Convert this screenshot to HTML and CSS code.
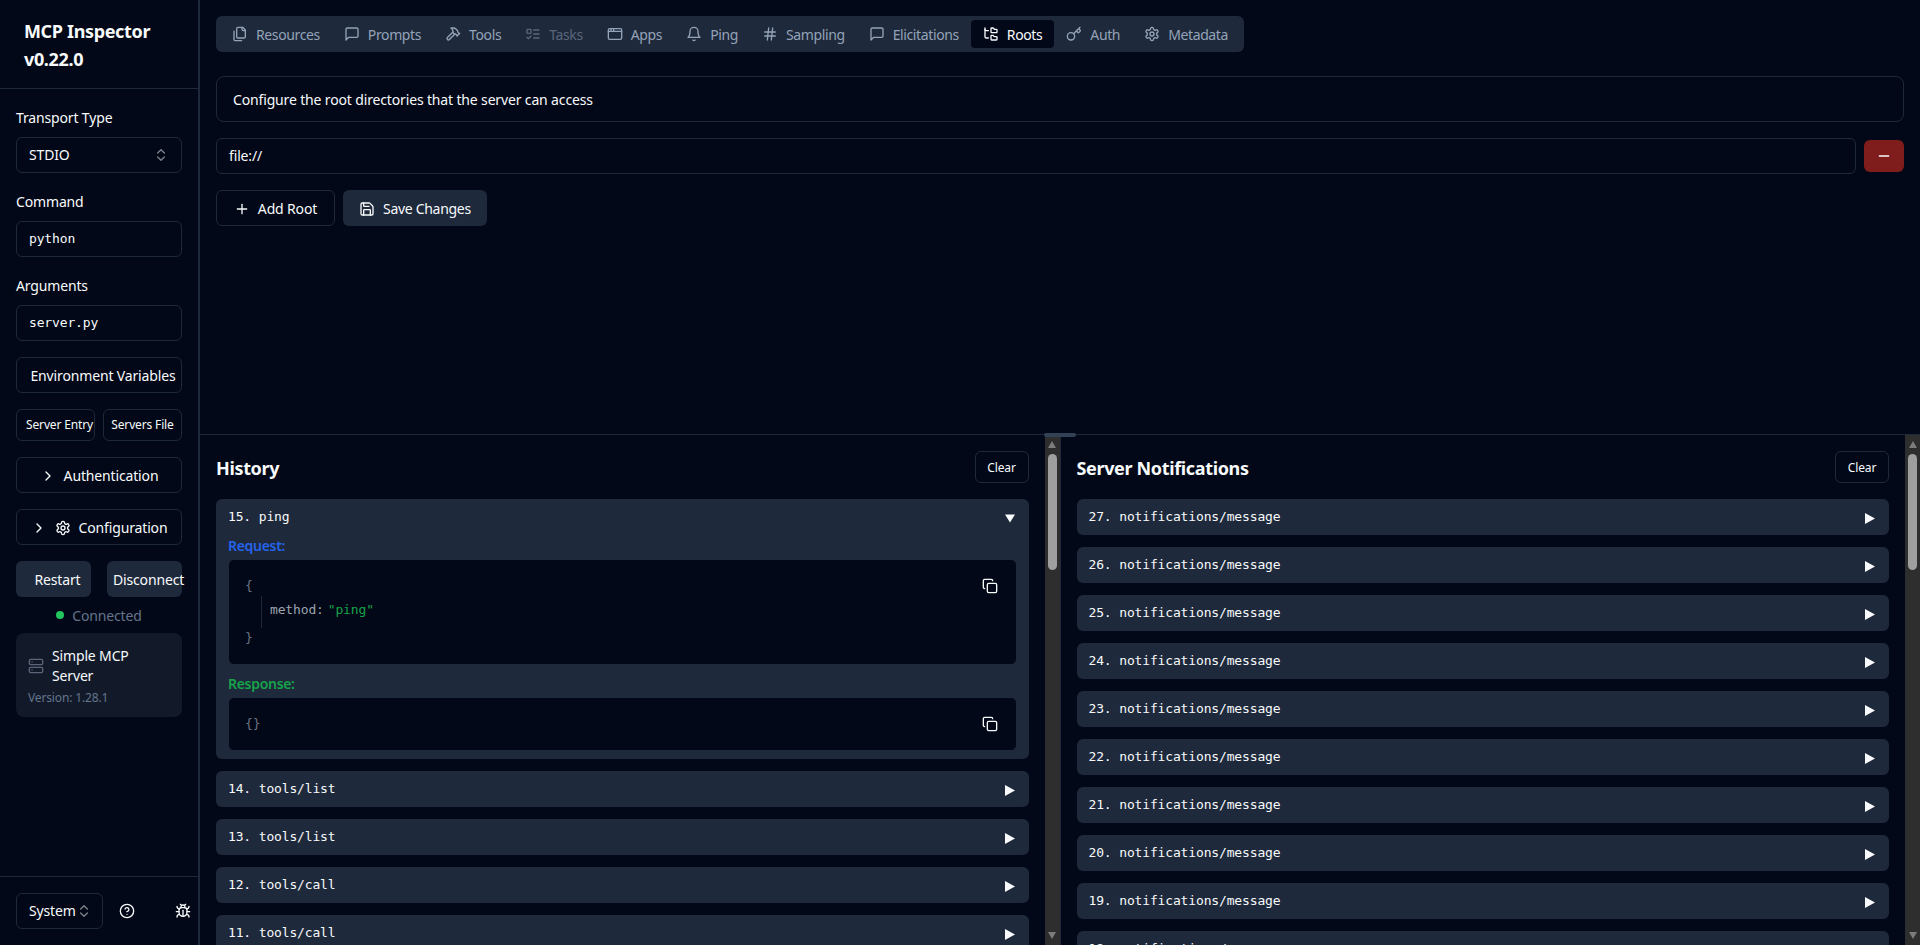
FILE: index.html
```html
<html>
	<head>
		<title>MCP Inspector</title>
		<link rel="stylesheet" href="styles.css">
	</head>

	<body>
		<svg class="Defs">
			<symbol id="i-files" viewBox="0 0 24 24"><path d="M20 7h-3a2 2 0 0 1-2-2V2"/><path d="M9 18a2 2 0 0 1-2-2V4a2 2 0 0 1 2-2h7l4 4v10a2 2 0 0 1-2 2Z"/><path d="M3 7.6v12.8A1.6 1.6 0 0 0 4.6 22h9.8"/></symbol>
			<symbol id="i-message" viewBox="0 0 24 24"><path d="M21 15a2 2 0 0 1-2 2H7l-4 4V5a2 2 0 0 1 2-2h14a2 2 0 0 1 2 2z"/></symbol>
			<symbol id="i-hammer" viewBox="0 0 24 24"><path d="m15 12-8.373 8.373a1 1 0 1 1-3-3L12 9"/><path d="m18 15 4-4"/><path d="m21.5 11.5-1.914-1.914A2 2 0 0 1 19 8.172V7l-2.26-2.26a6 6 0 0 0-4.202-1.756L9 2.96l.92.82A6.18 6.18 0 0 1 12 8.4V10l2 2h1.172a2 2 0 0 1 1.414.586L18.5 14.5"/></symbol>
			<symbol id="i-todo" viewBox="0 0 24 24"><rect x="3" y="5" width="6" height="6" rx="1"/><path d="m3 17 2 2 4-4"/><path d="M13 6h8"/><path d="M13 12h8"/><path d="M13 18h8"/></symbol>
			<symbol id="i-window" viewBox="0 0 24 24"><rect x="2" y="4" width="20" height="16" rx="2"/><path d="M10 4v4"/><path d="M2 8h20"/><path d="M6 4v4"/></symbol>
			<symbol id="i-bell" viewBox="0 0 24 24"><path d="M6 8a6 6 0 0 1 12 0c0 7 3 9 3 9H3s3-2 3-9"/><path d="M10.3 21a1.94 1.94 0 0 0 3.4 0"/></symbol>
			<symbol id="i-hash" viewBox="0 0 24 24"><path d="M4 9h16"/><path d="M4 15h16"/><path d="M10 3 8 21"/><path d="M16 3l-2 18"/></symbol>
			<symbol id="i-tree" viewBox="0 0 24 24"><path d="M20 10a1 1 0 0 0 1-1V6a1 1 0 0 0-1-1h-2.5a1 1 0 0 1-.8-.4l-.9-1.2A1 1 0 0 0 15 3h-2a1 1 0 0 0-1 1v5a1 1 0 0 0 1 1Z"/><path d="M20 21a1 1 0 0 0 1-1v-3a1 1 0 0 0-1-1h-2.9a1 1 0 0 1-.88-.55l-.42-.85a1 1 0 0 0-.92-.6H13a1 1 0 0 0-1 1v5a1 1 0 0 0 1 1Z"/><path d="M3 5a2 2 0 0 0 2 2h3"/><path d="M3 3v13a2 2 0 0 0 2 2h3"/></symbol>
			<symbol id="i-key" viewBox="0 0 24 24"><path d="m15.5 7.5 2.3 2.3a1 1 0 0 0 1.4 0l2.1-2.1a1 1 0 0 0 0-1.4L19 4"/><path d="m21 2-9.6 9.6"/><circle cx="7.5" cy="15.5" r="5.5"/></symbol>
			<symbol id="i-gear" viewBox="0 0 24 24"><path d="M12.22 2h-.44a2 2 0 0 0-2 2v.18a2 2 0 0 1-1 1.73l-.43.25a2 2 0 0 1-2 0l-.15-.08a2 2 0 0 0-2.73.73l-.22.38a2 2 0 0 0 .73 2.73l.15.1a2 2 0 0 1 1 1.72v.51a2 2 0 0 1-1 1.74l-.15.09a2 2 0 0 0-.73 2.73l.22.38a2 2 0 0 0 2.73.73l.15-.08a2 2 0 0 1 2 0l.43.25a2 2 0 0 1 1 1.73V20a2 2 0 0 0 2 2h.44a2 2 0 0 0 2-2v-.18a2 2 0 0 1 1-1.73l.43-.25a2 2 0 0 1 2 0l.15.08a2 2 0 0 0 2.73-.73l.22-.39a2 2 0 0 0-.73-2.73l-.15-.08a2 2 0 0 1-1-1.74v-.5a2 2 0 0 1 1-1.74l.15-.09a2 2 0 0 0 .73-2.73l-.22-.38a2 2 0 0 0-2.73-.73l-.15.08a2 2 0 0 1-2 0l-.43-.25a2 2 0 0 1-1-1.73V4a2 2 0 0 0-2-2z"/><circle cx="12" cy="12" r="3"/></symbol>
			<symbol id="i-plus" viewBox="0 0 24 24"><path d="M5 12h14"/><path d="M12 5v14"/></symbol>
			<symbol id="i-minus" viewBox="0 0 24 24"><path d="M5 12h14"/></symbol>
			<symbol id="i-save" viewBox="0 0 24 24"><path d="M15.2 3a2 2 0 0 1 1.4.6l3.8 3.8a2 2 0 0 1 .6 1.4V19a2 2 0 0 1-2 2H5a2 2 0 0 1-2-2V5a2 2 0 0 1 2-2z"/><path d="M17 21v-7a1 1 0 0 0-1-1H8a1 1 0 0 0-1 1v7"/><path d="M7 3v4a1 1 0 0 0 1 1h7"/></symbol>
			<symbol id="i-updown" viewBox="0 0 24 24"><path d="m7 15 5 5 5-5"/><path d="m7 9 5-5 5 5"/></symbol>
			<symbol id="i-right" viewBox="0 0 24 24"><path d="m9 18 6-6-6-6"/></symbol>
			<symbol id="i-server" viewBox="0 0 24 24"><rect width="20" height="8" x="2" y="2" rx="2" ry="2"/><rect width="20" height="8" x="2" y="14" rx="2" ry="2"/><path d="M6 6h.01"/><path d="M6 18h.01"/></symbol>
			<symbol id="i-help" viewBox="0 0 24 24"><circle cx="12" cy="12" r="10"/><path d="M9.09 9a3 3 0 0 1 5.83 1c0 2-3 3-3 3"/><path d="M12 17h.01"/></symbol>
			<symbol id="i-bug" viewBox="0 0 24 24"><path d="m8 2 1.88 1.88"/><path d="M14.12 3.88 16 2"/><path d="M9 7.13v-1a3.003 3.003 0 1 1 6 0v1"/><path d="M12 20c-3.3 0-6-2.7-6-6v-3a4 4 0 0 1 4-4h4a4 4 0 0 1 4 4v3c0 3.3-2.7 6-6 6"/><path d="M12 20v-9"/><path d="M6.53 9C4.6 8.8 3 7.1 3 5"/><path d="M6 13H2"/><path d="M3 21c0-2.1 1.7-3.9 3.8-4"/><path d="M20.97 5c0 2.1-1.6 3.8-3.5 4"/><path d="M22 13h-4"/><path d="M17.2 17c2.1.1 3.8 1.9 3.8 4"/></symbol>
			<symbol id="i-copy" viewBox="0 0 24 24"><rect width="14" height="14" x="8" y="8" rx="2" ry="2"/><path d="M4 16c-1.1 0-2-.9-2-2V4c0-1.1.9-2 2-2h10c1.1 0 2 .9 2 2"/></symbol>
		</svg>

		<div class="App">
			<aside class="Sidebar">
				<div class="Brand">
					<h1>MCP Inspector<br>v0.22.0</h1>
				</div>

				<div class="Form">
					<label>Transport Type</label>
					<div class="Control Nudge">STDIO <svg class="Icon Faded"><use href="#i-updown"/></svg></div>
					<label>Command</label>
					<div class="Control Mono">python</div>
					<label>Arguments</label>
					<div class="Control Mono">server.py</div>

					<div class="Stack">
						<button class="Btn Shift">Environment Variables</button>
						<div class="Pair">
							<button class="Btn Small Shift">Server Entry</button>
							<button class="Btn Small">Servers File</button>
						</div>
						<button class="Btn"><svg class="Icon"><use href="#i-right"/></svg>Authentication</button>
						<button class="Btn"><svg class="Icon"><use href="#i-right"/></svg><svg class="Icon"><use href="#i-gear"/></svg>Configuration</button>
						<div class="Pair Wide">
							<button class="Btn Solid Shift">Restart</button>
							<button class="Btn Solid Shift">Disconnect</button>
						</div>
					</div>

					<div class="Status"><span class="Dot"></span>Connected</div>

					<div class="ServerCard">
						<div class="ServerName">
							<svg class="Icon Muted"><use href="#i-server"/></svg>
							<span>Simple MCP Server</span>
						</div>
						<div class="ServerVersion">Version: 1.28.1</div>
					</div>
				</div>

				<div class="SidebarFoot">
					<div class="Control Theme Nudge">System <svg class="Icon Faded"><use href="#i-updown"/></svg></div>
					<span class="IconBtn"><svg class="Icon"><use href="#i-help"/></svg></span>
					<span class="IconBtn"><svg class="Icon"><use href="#i-bug"/></svg></span>
				</div>
			</aside>

			<main class="Main">
				<section class="Top">
					<nav class="Tabs">
						<a class="Tab"><svg class="Icon"><use href="#i-files"/></svg>Resources</a>
						<a class="Tab"><svg class="Icon"><use href="#i-message"/></svg>Prompts</a>
						<a class="Tab"><svg class="Icon"><use href="#i-hammer"/></svg>Tools</a>
						<a class="Tab Disabled"><svg class="Icon"><use href="#i-todo"/></svg>Tasks</a>
						<a class="Tab"><svg class="Icon"><use href="#i-window"/></svg>Apps</a>
						<a class="Tab"><svg class="Icon"><use href="#i-bell"/></svg>Ping</a>
						<a class="Tab"><svg class="Icon"><use href="#i-hash"/></svg>Sampling</a>
						<a class="Tab"><svg class="Icon"><use href="#i-message"/></svg>Elicitations</a>
						<a class="Tab Active"><svg class="Icon"><use href="#i-tree"/></svg>Roots</a>
						<a class="Tab"><svg class="Icon"><use href="#i-key"/></svg>Auth</a>
						<a class="Tab"><svg class="Icon"><use href="#i-gear"/></svg>Metadata</a>
					</nav>

					<div class="Notice">Configure the root directories that the server can access</div>

					<div class="RootRow">
						<div class="Control RootInput Nudge">file://</div>
						<button class="Btn Danger"><svg class="Icon"><use href="#i-minus"/></svg></button>
					</div>

					<div class="Actions">
						<button class="Btn Pad AddRoot"><svg class="Icon"><use href="#i-plus"/></svg>Add Root</button>
						<button class="Btn Solid Pad"><svg class="Icon"><use href="#i-save"/></svg>Save Changes</button>
					</div>
				</section>

				<section class="Bottom">
					<span class="Handle"></span>

					<div class="Pane">
						<div class="PaneBody">
							<div class="PaneHead">
								<h2>History</h2>
								<button class="Btn Small Clear">Clear</button>
							</div>
							<div class="Entry Open">
								<div class="EntryHead">15. ping<svg class="Tri" viewBox="0 0 11 9"><polygon points="0,0 11,0 5.5,9"/></svg></div>
								<div class="Tag Blue">Request:</div>
								<div class="Json">
									<svg class="Icon CopyIcon"><use href="#i-copy"/></svg>
									<div>{</div>
									<div class="JsonRow">method:<span class="Str">"ping"</span></div>
									<div>}</div>
								</div>
								<div class="Tag Green">Response:</div>
								<div class="Json">
									<svg class="Icon CopyIcon"><use href="#i-copy"/></svg>
									<div>{}</div>
								</div>
							</div>
							<div class="Entry"><div class="EntryHead">14. tools/list<svg class="Tri" viewBox="0 0 10 11"><polygon points="0,0 10,5.5 0,11"/></svg></div></div>
							<div class="Entry"><div class="EntryHead">13. tools/list<svg class="Tri" viewBox="0 0 10 11"><polygon points="0,0 10,5.5 0,11"/></svg></div></div>
							<div class="Entry"><div class="EntryHead">12. tools/call<svg class="Tri" viewBox="0 0 10 11"><polygon points="0,0 10,5.5 0,11"/></svg></div></div>
							<div class="Entry"><div class="EntryHead">11. tools/call<svg class="Tri" viewBox="0 0 10 11"><polygon points="0,0 10,5.5 0,11"/></svg></div></div>
						</div>
						<div class="Scroll"><i class="ArrowUp"></i><b></b><i class="ArrowDown"></i></div>
					</div>

					<div class="Pane Second">
						<div class="PaneBody">
							<div class="PaneHead">
								<h2>Server Notifications</h2>
								<button class="Btn Small Clear">Clear</button>
							</div>
							<div class="Entry"><div class="EntryHead">27. notifications/message<svg class="Tri" viewBox="0 0 10 11"><polygon points="0,0 10,5.5 0,11"/></svg></div></div>
							<div class="Entry"><div class="EntryHead">26. notifications/message<svg class="Tri" viewBox="0 0 10 11"><polygon points="0,0 10,5.5 0,11"/></svg></div></div>
							<div class="Entry"><div class="EntryHead">25. notifications/message<svg class="Tri" viewBox="0 0 10 11"><polygon points="0,0 10,5.5 0,11"/></svg></div></div>
							<div class="Entry"><div class="EntryHead">24. notifications/message<svg class="Tri" viewBox="0 0 10 11"><polygon points="0,0 10,5.5 0,11"/></svg></div></div>
							<div class="Entry"><div class="EntryHead">23. notifications/message<svg class="Tri" viewBox="0 0 10 11"><polygon points="0,0 10,5.5 0,11"/></svg></div></div>
							<div class="Entry"><div class="EntryHead">22. notifications/message<svg class="Tri" viewBox="0 0 10 11"><polygon points="0,0 10,5.5 0,11"/></svg></div></div>
							<div class="Entry"><div class="EntryHead">21. notifications/message<svg class="Tri" viewBox="0 0 10 11"><polygon points="0,0 10,5.5 0,11"/></svg></div></div>
							<div class="Entry"><div class="EntryHead">20. notifications/message<svg class="Tri" viewBox="0 0 10 11"><polygon points="0,0 10,5.5 0,11"/></svg></div></div>
							<div class="Entry"><div class="EntryHead">19. notifications/message<svg class="Tri" viewBox="0 0 10 11"><polygon points="0,0 10,5.5 0,11"/></svg></div></div>
							<div class="Entry"><div class="EntryHead">18. notifications/message<svg class="Tri" viewBox="0 0 10 11"><polygon points="0,0 10,5.5 0,11"/></svg></div></div>
						</div>
						<div class="Scroll"><i class="ArrowUp"></i><b></b><i class="ArrowDown"></i></div>
					</div>
				</section>
			</main>
		</div>
	</body>
</html>
```

FILE: styles.css
```css
*{
	box-sizing: border-box;
}
html, body{
	margin: 0;
	height: 100%;
	overflow: hidden;
}
body{
	background-color: #020817;
	color: #f8fafc;
	font-family: "Noto Sans", sans-serif;
	font-size: 14px;
	line-height: 20px;
	letter-spacing: -0.15px;
}
.Defs{
	display: none;
}
.Icon{
	width: 16px;
	height: 16px;
	flex: none;
	fill: none;
	stroke: currentColor;
	stroke-width: 2;
	stroke-linecap: round;
	stroke-linejoin: round;
}
.Faded{
	opacity: 0.5;
}
.Muted{
	color: #5b6678;
}
.Mono{
	font-family: "DejaVu Sans Mono", monospace;
	font-size: 13px;
	letter-spacing: -0.15px;
}
.Nudge{
	padding-top: 2px;
}
.App{
	display: flex;
	height: 100vh;
}

/* sidebar */
.Sidebar{
	width: 200px;
	flex: none;
	display: flex;
	flex-direction: column;
	border-right: 2px solid #1e293b;
}
.Brand{
	height: 89px;
	padding: 17px 24px 0;
	border-bottom: 1px solid #1e293b;
}
.Brand h1{
	margin: 0;
	font-size: 18px;
	line-height: 28px;
	font-weight: 700;
	letter-spacing: -0.35px;
}
.Form{
	flex: 1;
	padding: 19px 16px 0;
}
.Form label{
	display: block;
	margin-bottom: 9px;
}
.Control{
	height: 36px;
	display: flex;
	align-items: center;
	justify-content: space-between;
	padding: 0 12px;
	border: 1px solid #1e293b;
	border-radius: 6px;
	margin-bottom: 19px;
}
.Stack{
	display: flex;
	flex-direction: column;
	gap: 16px;
	margin-top: -3px;
}
.Pair{
	display: grid;
	grid-template-columns: 1fr 1fr;
	gap: 8px;
}
.Pair.Wide{
	gap: 16px;
}
.Pair .Btn{
	min-width: 0;
}
.Btn{
	height: 36px;
	display: flex;
	align-items: center;
	justify-content: center;
	gap: 8px;
	padding: 2px 0 0;
	border: 1px solid #1e293b;
	border-radius: 6px;
	background: none;
	color: inherit;
	font: inherit;
	letter-spacing: inherit;
	white-space: nowrap;
}
.Btn.Small{
	height: 32px;
	padding-top: 0;
	font-size: 12px;
}
.Btn.Shift{
	padding-left: 8px;
}
.Btn.Solid{
	border: 0;
	background-color: #1e293b;
}
.Btn.Pad{
	padding: 2px 16px 0;
}
.Btn.Solid.Pad{
	letter-spacing: -0.3px;
}
.Btn.AddRoot{
	width: 119px;
}
.Status{
	display: flex;
	align-items: center;
	justify-content: center;
	gap: 8px;
	margin-top: 9px;
	color: #64748b;
}
.Dot{
	width: 8px;
	height: 8px;
	margin-top: -2px;
	border-radius: 50%;
	background-color: #22c55e;
}
.ServerCard{
	margin-top: 7px;
	height: 84px;
	padding: 13px 12px 0;
	border-radius: 8px;
	background-color: #121a2a;
}
.ServerName{
	display: flex;
	align-items: center;
	gap: 8px;
}
.ServerVersion{
	margin-top: 2px;
	font-size: 12px;
	line-height: 20px;
	color: #64748b;
}
.SidebarFoot{
	height: 69px;
	display: flex;
	padding: 16px 0 0 16px;
	border-top: 1px solid #1e293b;
}
.Control.Theme{
	width: 87px;
	gap: 0;
	padding-right: 12px;
	margin: 0;
}
.IconBtn{
	width: 36px;
	height: 36px;
	flex: none;
	display: flex;
	align-items: center;
	justify-content: center;
	margin-left: 6px;
}
.IconBtn + .IconBtn{
	margin-left: 20px;
}

/* top panel */
.Main{
	flex: 1;
	min-width: 0;
	display: flex;
	flex-direction: column;
}
.Top{
	height: 434px;
	flex: none;
	padding: 16px 16px 0;
}
.Tabs{
	display: inline-flex;
	height: 36px;
	padding: 4px;
	border-radius: 6px;
	background-color: #1e293b;
	color: #94a3b8;
	letter-spacing: -0.38px;
	vertical-align: top;
}
.Tab{
	display: flex;
	align-items: center;
	gap: 8px;
	padding: 2px 12px 0;
	border-radius: 4px;
}
.Tab .Icon{
	margin-top: -2px;
}
.Tab.Active{
	background-color: #020817;
	color: #f8fafc;
}
.Tab.Disabled{
	opacity: 0.5;
}
.Notice{
	height: 46px;
	display: flex;
	align-items: center;
	margin-top: 24px;
	padding: 2px 16px 0;
	border: 1px solid #1e293b;
	border-radius: 8px;
}
.RootRow{
	display: flex;
	align-items: center;
	gap: 8px;
	margin-top: 16px;
}
.Control.RootInput{
	flex: 1;
	margin: 0;
}
.Btn.Danger{
	width: 40px;
	height: 32px;
	padding: 0;
	border: 0;
	background-color: #7f1d1d;
}
.Actions{
	display: flex;
	gap: 8px;
	margin-top: 16px;
}

/* bottom panes */
.Bottom{
	position: relative;
	flex: 1;
	min-height: 0;
	display: flex;
	border-top: 1px solid #1e293b;
}
.Handle{
	position: absolute;
	left: 844px;
	top: -2px;
	width: 32px;
	height: 4px;
	border-radius: 2px;
	background-color: #334155;
}
.Pane{
	flex: 1;
	min-width: 0;
	display: flex;
}
.Pane.Second{
	border-left: 1px solid #1e293b;
}
.PaneBody{
	flex: 1;
	min-width: 0;
	padding: 16px;
	overflow: hidden;
}
.PaneHead{
	display: flex;
	align-items: center;
	justify-content: space-between;
	margin-bottom: 16px;
}
.PaneHead h2{
	margin: 0;
	padding-top: 2px;
	font-size: 18px;
	line-height: 28px;
	font-weight: 700;
	letter-spacing: -0.35px;
}
.Btn.Clear{
	width: 54px;
	padding-top: 2px;
}
.Entry{
	padding: 8px 12px;
	margin-bottom: 12px;
	border-radius: 6px;
	background-color: #1e293b;
	font-family: "DejaVu Sans Mono", monospace;
	font-size: 13px;
	letter-spacing: -0.15px;
}
.EntryHead{
	display: flex;
	align-items: center;
	justify-content: space-between;
}
.Tri{
	width: 10px;
	height: 11px;
	margin: 3px 2px 0 0;
	fill: #f8fafc;
}
.Tag{
	margin-top: 9px;
	margin-bottom: 3px;
	font-family: "Noto Sans", sans-serif;
	font-size: 14px;
	font-weight: 600;
	letter-spacing: -0.3px;
}
.Blue{
	color: #2563eb;
}
.Green{
	color: #16a34a;
}
.Json{
	position: relative;
	padding: 16px;
	border: 1px solid #1e293b;
	border-radius: 6px;
	background-color: #020817;
	color: #6b7280;
}
.JsonRow{
	margin-left: 16px;
	padding: 4px 0 8px 8px;
	border-left: 1px solid #1e293b;
	color: #9ca3af;
}
.Str{
	margin-left: 4px;
	color: #16a34a;
}
.CopyIcon{
	position: absolute;
	right: 18px;
	top: 18px;
	color: #f8fafc;
}

/* drawn scrollbars */
.Scroll{
	width: 15px;
	flex: none;
	display: flex;
	flex-direction: column;
	align-items: center;
	background-color: #2e2e2e;
}
.Scroll b{
	width: 9px;
	height: 116px;
	margin-top: 6px;
	border-radius: 5px;
	background-color: #9f9f9f;
}
.Scroll i{
	width: 0;
	height: 0;
	border-left: 4.5px solid transparent;
	border-right: 4.5px solid transparent;
}
.ArrowUp{
	margin-top: 6px;
	border-bottom: 7px solid #7c7c7c;
}
.ArrowDown{
	margin-top: auto;
	margin-bottom: 6px;
	border-top: 7px solid #7c7c7c;
}
```
